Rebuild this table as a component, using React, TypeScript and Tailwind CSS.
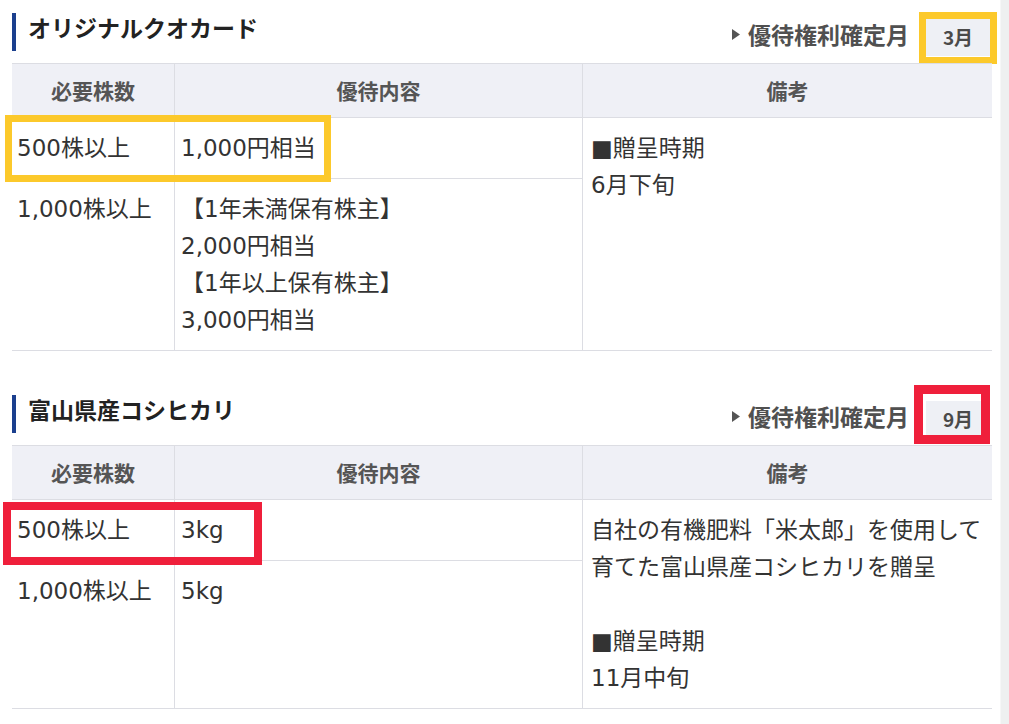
type Row = {
  shares: string
  content: string[]
}

type Benefit = {
  title: string
  month: string
  rows: Row[]
  note: string[]
  badgeMark: string
  rowMark: string
}

const benefits: Benefit[] = [
  {
    title: 'オリジナルクオカード',
    month: '3月',
    rows: [
      { shares: '500株以上', content: ['1,000円相当'] },
      {
        shares: '1,000株以上',
        content: ['【1年未満保有株主】', '2,000円相当', '【1年以上保有株主】', '3,000円相当'],
      },
    ],
    note: ['■贈呈時期', '6月下旬'],
    badgeMark: 'left-[907px] -top-px w-[78px] h-[52px] border-[7px] border-[#fcc92b]',
    rowMark: '-left-[7px] top-[52px] w-[326px] h-[67px] border-[7px] border-[#fcc92b]',
  },
  {
    title: '富山県産コシヒカリ',
    month: '9月',
    rows: [
      { shares: '500株以上', content: ['3kg'] },
      { shares: '1,000株以上', content: ['5kg'] },
    ],
    note: [
      '自社の有機肥料「米太郎」を使用して',
      '育てた富山県産コシヒカリを贈呈',
      '',
      '■贈呈時期',
      '11月中旬',
    ],
    badgeMark: 'left-[902px] -top-[10px] w-[76px] h-[59px] border-[9px] border-[#ef1f3b]',
    rowMark: '-left-[9px] top-[57px] w-[259px] h-[63px] border-[8px] border-[#ef1f3b]',
  },
]

const Lines = ({ lines }: { lines: string[] }) => (
  <>
    {lines.map((line, i) => (
      <div key={i} className="h-[37px] whitespace-nowrap leading-[37px]">
        {line || '\u00a0'}
      </div>
    ))}
  </>
)

const BenefitTable = ({ benefit }: { benefit: Benefit }) => {
  const [first, second] = benefit.rows
  const cell = 'border-b border-[#dcdde3] pt-3 pb-[11px]'
  const head = 'flex items-center justify-center border-y border-[#dcdde3] bg-[#eff0f6]'

  return (
    <section>
      {/* 見出し */}
      <div className="relative flex h-[50px] items-start justify-between">
        <div className="h-[38px] border-l-4 border-[#1b3f8e] pl-3 pt-px text-[23px] font-bold leading-[26px] text-[#222]">
          {benefit.title}
        </div>
        <div className="flex items-start">
          <div className="mt-[8px] flex items-center gap-[8px] text-[23px] font-bold leading-[26px] text-[#505050]">
            <svg width="8" height="11" viewBox="0 0 8 11" className="mt-px">
              <path d="M0 0 L8 5.5 L0 11 Z" fill="#555" />
            </svg>
            優待権利確定月
          </div>
          <div className="ml-[17px] mr-[2px] mt-[6px] flex h-[37px] w-[64px] items-center justify-center bg-[#eef0f5] text-[19px] font-bold text-[#4a4a4a]">
            {benefit.month}
          </div>
        </div>
        <div className={`pointer-events-none absolute ${benefit.badgeMark}`} />
      </div>

      {/* 表 */}
      <div className="relative">
        <div className="grid grid-cols-[163px_408px_1fr] grid-rows-[55px_auto_1fr] text-[23px] text-[#333] font-['DejaVu_Sans','Noto_Sans_CJK_JP',sans-serif]">
          <div className={`${head} col-start-1 row-start-1 border-r text-[21px] font-bold text-[#555] font-['Noto_Sans_CJK_JP',sans-serif]`}>
            必要株数
          </div>
          <div className={`${head} col-start-2 row-start-1 border-r text-[21px] font-bold text-[#555] font-['Noto_Sans_CJK_JP',sans-serif]`}>
            優待内容
          </div>
          <div className={`${head} col-start-3 row-start-1 text-[21px] font-bold text-[#555] font-['Noto_Sans_CJK_JP',sans-serif]`}>
            備考
          </div>

          <div className={`${cell} col-start-1 row-start-2 border-r px-[5px]`}>
            <Lines lines={[first.shares]} />
          </div>
          <div className={`${cell} col-start-2 row-start-2 border-r px-[6px]`}>
            <Lines lines={first.content} />
          </div>
          <div className={`${cell} col-start-3 row-start-2 row-span-2 px-2`}>
            <Lines lines={benefit.note} />
          </div>

          <div className={`${cell} col-start-1 row-start-3 border-r px-[5px]`}>
            <Lines lines={[second.shares]} />
          </div>
          <div className={`${cell} col-start-2 row-start-3 border-r px-[6px]`}>
            <Lines lines={second.content} />
          </div>
        </div>
        <div className={`pointer-events-none absolute ${benefit.rowMark}`} />
      </div>
    </section>
  )
}

export default function App() {
  return (
    <div className="flex min-h-screen bg-white font-['Noto_Sans_CJK_JP','Noto_Sans',sans-serif]">
      <main className="flex w-[1000px] flex-col gap-[44px] pb-4 pl-3 pr-2 pt-[13px]">
        {benefits.map((b) => (
          <BenefitTable key={b.title} benefit={b} />
        ))}
      </main>
      <aside className="flex-1 border-l border-[#f6f7f7] bg-[#eef0f0]" />
    </div>
  )
}
